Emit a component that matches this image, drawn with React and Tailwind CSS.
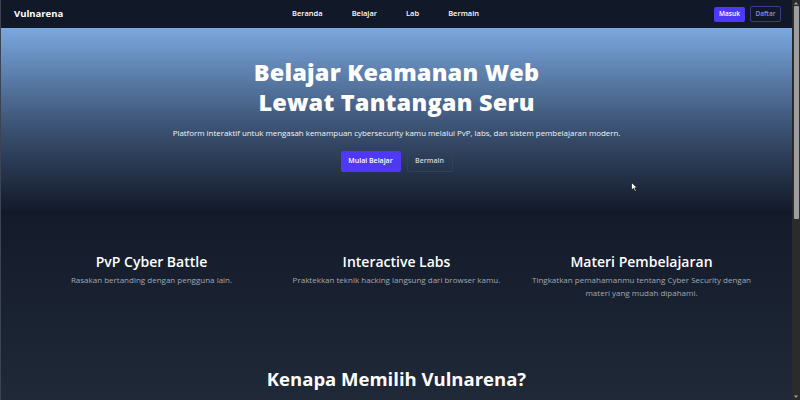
import React from 'react';

// Landing page Vulnarena
const navLinks = ['Beranda', 'Belajar', 'Lab', 'Bermain'];

const features = [
  { title: 'PvP Cyber Battle', desc: 'Rasakan bertanding dengan pengguna lain.' },
  { title: 'Interactive Labs', desc: 'Praktekkan teknik hacking langsung dari browser kamu.' },
  { title: 'Materi Pembelajaran', desc: 'Tingkatkan pemahamanmu tentang Cyber Security dengan materi yang mudah dipahami.' },
];

const App = () => {
  return (
    <div className="w-[800px] h-[400px] overflow-hidden flex bg-[#111827] text-white font-['Open_Sans','Noto_Sans',sans-serif]">
      {/* konten halaman */}
      <div className="flex-1 flex flex-col relative border-l border-[#3a4455]">
        {/* navbar */}
        <nav className="h-[28px] shrink-0 bg-[#111827] flex items-center justify-between pl-[13px] pr-[11px]">
          <div className="text-[9.5px] font-bold w-[200px]">Vulnarena</div>
          <div className="flex items-center gap-[29px] text-[7.5px] font-semibold mr-[24px]">
            {navLinks.map((l) => (
              <a key={l} className="text-white">{l}</a>
            ))}
          </div>
          <div className="flex items-center gap-[5px] w-[200px] justify-end">
            <button className="h-[15px] w-[31px] rounded-[2px] bg-[#4f39f6] text-[6.5px] font-semibold text-white">Masuk</button>
            <button className="h-[16px] w-[31px] rounded-[2px] border border-[#3b3a8f] text-[6.5px] font-semibold text-[#8c8ce0]">Daftar</button>
          </div>
        </nav>

        {/* hero */}
        <section className="h-[187px] shrink-0 bg-gradient-to-b from-[#7aa8e0] via-[#3f5779] to-[#111827] flex flex-col items-center pt-[29px]">
          <h1 className="text-[23.5px] leading-[30px] font-extrabold text-center tracking-[0.2px]">
            Belajar Keamanan Web<br />Lewat Tantangan Seru
          </h1>
          <p className="mt-[11px] text-[7.9px] text-[#f3f4f6]">
            Platform interaktif untuk mengasah kemampuan cybersecurity kamu melalui PvP, labs, dan sistem pembelajaran modern.
          </p>
          <div className="mt-[11px] flex gap-[6px]">
            <button className="h-[21px] w-[60px] rounded-[2px] bg-[#4f39f6] text-[7px] font-semibold">Mulai Belajar</button>
            <button className="h-[21px] w-[46px] rounded-[2px] border border-[#354055] text-[7px] font-semibold text-[#d1d5db]">Bermain</button>
          </div>
        </section>

        {/* fitur */}
        <section className="flex-1 bg-gradient-to-b from-[#141b2b] to-[#1f2937] flex flex-col items-center">
          <div className="grid grid-cols-3 w-[735px] mt-[37px]">
            {features.map((f) => (
              <div key={f.title} className="flex flex-col items-center px-[12px] text-center">
                <h3 className="text-[14px] leading-[20px] font-semibold">{f.title}</h3>
                <p className="mt-[1px] text-[8px] leading-[13px] text-[#a1a8b3] max-w-[220px]">{f.desc}</p>
              </div>
            ))}
          </div>
          <h2 className="mt-[66px] text-[18.5px] font-bold">Kenapa Memilih Vulnarena?</h2>
        </section>

        {/* kursor mouse */}
        <svg className="absolute left-[630px] top-[182px]" width="7" height="10" viewBox="0 0 7 10">
          <path d="M0.5 0.5 L0.5 8 L2.5 6.3 L4 9.3 L5.2 8.7 L3.8 5.8 L6.2 5.8 Z" fill="#fff" stroke="#000" strokeWidth="0.6" />
        </svg>
      </div>

      {/* scrollbar */}
      <div className="w-[8px] shrink-0 bg-[#2b2b2b] flex flex-col items-center">
        <svg width="8" height="6" viewBox="0 0 8 6"><path d="M2 4.5 L4 2 L6 4.5 Z" fill="#a3a3a3" /></svg>
        <div className="w-[5px] h-[213px] rounded-[1px] bg-[#9f9f9f]" />
        <div className="flex-1" />
        <svg width="8" height="6" viewBox="0 0 8 6"><path d="M2 1.5 L4 4 L6 1.5 Z" fill="#a3a3a3" /></svg>
      </div>
    </div>
  );
};

export default App;
